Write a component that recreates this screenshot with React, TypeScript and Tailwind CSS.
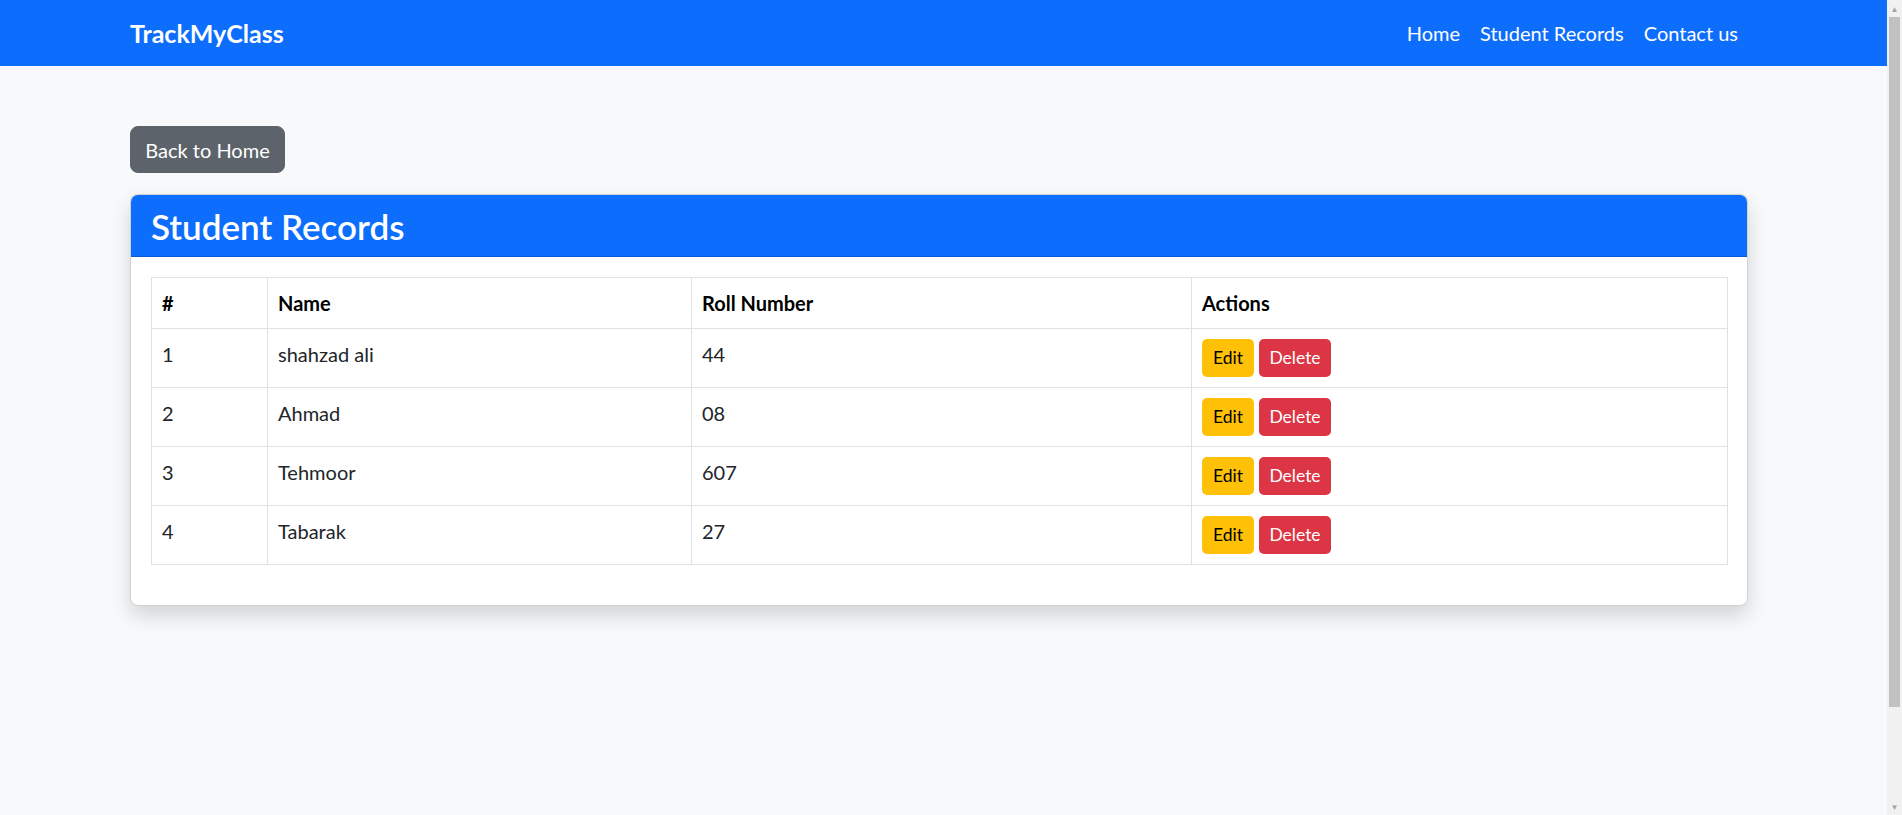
import React from "react";

const students = [
  { id: 1, name: "shahzad ali", roll: "44" },
  { id: 2, name: "Ahmad", roll: "08" },
  { id: 3, name: "Tehmoor", roll: "607" },
  { id: 4, name: "Tabarak", roll: "27" },
];

export default function App() {
  return (
    <div
      className="flex min-h-[815px] h-[815px] overflow-hidden bg-[#f8f9fa] text-[#212529]"
      style={{ fontFamily: "Lato, 'Noto Sans', sans-serif" }}
    >
      <div className="flex-1 min-w-0">
        <nav className="h-[66px] bg-[#0d6efd]">
          <div className="ml-[130px] w-[1618px] h-full flex items-center justify-between">
            <span className="text-[25px] font-bold text-white leading-[38px]">TrackMyClass</span>
            <ul className="flex items-center text-[20px] text-white leading-[30px]">
              <li className="px-[10px]">Home</li>
              <li className="px-[10px]">Student Records</li>
              <li className="px-[10px]">Contact us</li>
            </ul>
          </div>
        </nav>

        <main className="ml-[130px] w-[1618px] pt-[60px]">
          <button className="h-[47px] w-[155px] flex items-center justify-center rounded-[8px] border border-[#5c636a] bg-[#5c636a] text-white text-[20px] leading-[30px]">
            Back to Home
          </button>

          <div className="mt-[21px] rounded-[8px] border border-[rgba(0,0,0,0.175)] bg-white shadow-[0_10px_20px_rgba(0,0,0,0.15)] overflow-hidden">
            <div className="h-[62px] bg-[#0d6efd] border-b border-[rgba(0,0,0,0.175)] px-[20px] flex items-center">
              <h3 className="text-[35px] font-semibold leading-[42px] text-white">Student Records</h3>
            </div>
            <div className="p-[20px]">
              <table className="w-full table-fixed border-collapse mb-[20px] text-[20px] leading-[30px]">
                <colgroup>
                  <col className="w-[116px]" />
                  <col className="w-[424px]" />
                  <col className="w-[500px]" />
                  <col className="w-[536px]" />
                </colgroup>
                <thead>
                  <tr>
                    {["#", "Name", "Roll Number", "Actions"].map((h) => (
                      <th
                        key={h}
                        className="border border-[#dee2e6] p-[10px] text-left font-bold text-black align-top"
                      >
                        {h}
                      </th>
                    ))}
                  </tr>
                </thead>
                <tbody>
                  {students.map((s) => (
                    <tr key={s.id}>
                      <td className="border border-[#dee2e6] p-[10px] align-top">{s.id}</td>
                      <td className="border border-[#dee2e6] p-[10px] align-top">{s.name}</td>
                      <td className="border border-[#dee2e6] p-[10px] align-top">{s.roll}</td>
                      <td className="border border-[#dee2e6] p-[10px] align-top">
                        <div className="flex gap-[5px]">
                          <button className="h-[38px] w-[52px] flex items-center justify-center rounded-[5px] bg-[#ffc107] text-black text-[17.5px]">
                            Edit
                          </button>
                          <button className="h-[38px] w-[72px] flex items-center justify-center rounded-[5px] bg-[#dc3545] text-white text-[17.5px]">
                            Delete
                          </button>
                        </div>
                      </td>
                    </tr>
                  ))}
                </tbody>
              </table>
            </div>
          </div>
        </main>
      </div>

      <div className="w-[15px] shrink-0 bg-[#f1f1f1] flex flex-col">
        <div className="h-[17px] flex items-center justify-center text-[#a3a3a3] text-[8px] leading-none">▲</div>
        <div className="mx-[2px] h-[690px] bg-[#c1c1c1]" />
        <div className="flex-1" />
        <div className="h-[17px] flex items-center justify-center text-[#a3a3a3] text-[8px] leading-none">▼</div>
      </div>
    </div>
  );
}
